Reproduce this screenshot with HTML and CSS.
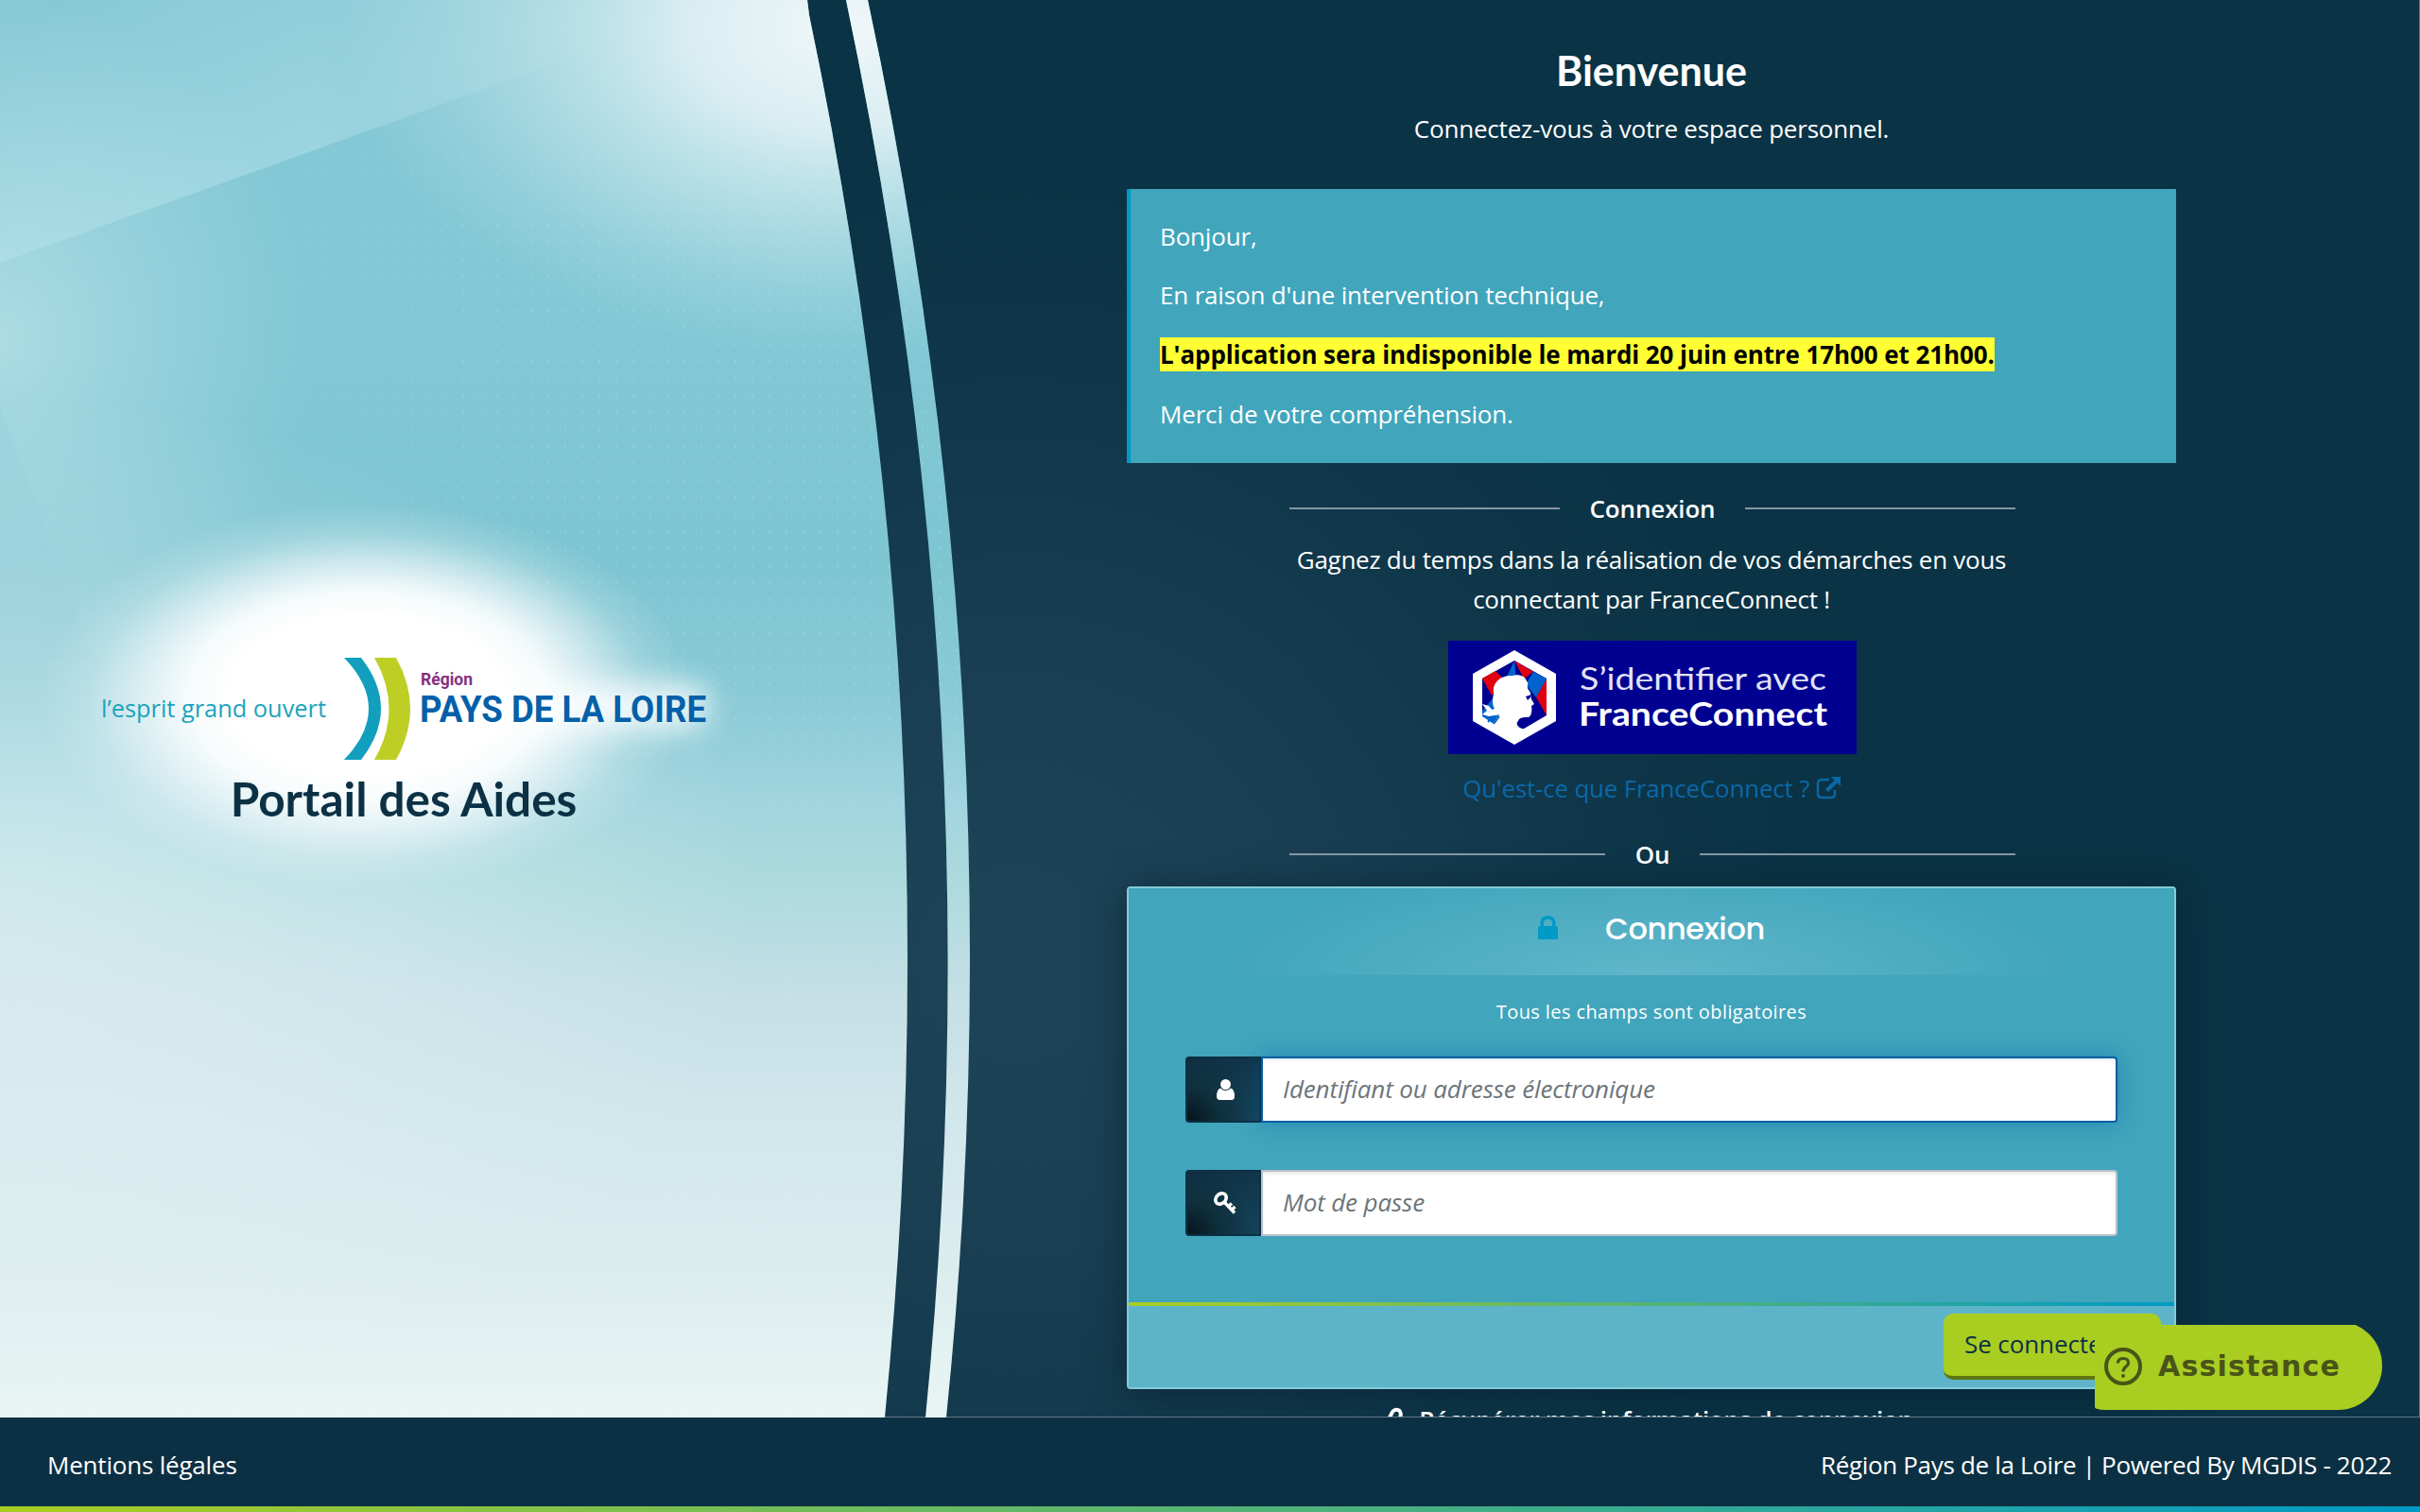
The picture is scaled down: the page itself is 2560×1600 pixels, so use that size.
FILE: index.html
```html
<!DOCTYPE html>
<html lang="fr">
<head>
<meta charset="utf-8">
<title>Portail des Aides</title>
<link rel="stylesheet" href="styles.css">
</head>
<body>
<div class="page">
  <main class="main">
    <aside class="brand">
      <svg class="scene" viewBox="0 0 1040 1500" aria-hidden="true">
        <defs>
          <linearGradient id="sky" gradientUnits="userSpaceOnUse" x1="0" y1="0" x2="0" y2="1500">
            <stop offset="0" stop-color="#86c8d5"/><stop offset=".2" stop-color="#82c8d5"/>
            <stop offset=".4" stop-color="#7ec5d2"/><stop offset=".5" stop-color="#8ccbd7"/>
            <stop offset=".57" stop-color="#a2d5df"/><stop offset=".62" stop-color="#acdadd"/>
            <stop offset=".7" stop-color="#c4dfe6"/><stop offset=".8" stop-color="#d2e8ec"/>
            <stop offset=".9" stop-color="#dcedef"/><stop offset="1" stop-color="#e9f5f4"/>
          </linearGradient>
          <linearGradient id="ray" gradientUnits="userSpaceOnUse" x1="90" y1="0" x2="180" y2="220">
            <stop offset="0" stop-color="#a9dce5" stop-opacity=".1"/><stop offset="1" stop-color="#a9dce5" stop-opacity=".65"/>
          </linearGradient>
          <linearGradient id="rayFade"><stop offset="0" stop-color="#fff"/><stop offset=".5" stop-color="#fff"/><stop offset="1" stop-color="#000"/></linearGradient>
          <mask id="rayMask"><rect width="660" height="300" fill="url(#rayFade)"/></mask>
          <radialGradient id="shine"><stop offset="0" stop-color="#f0f7f9"/><stop offset=".3" stop-color="#e6f3f6" stop-opacity=".88"/><stop offset=".55" stop-color="#daeff3" stop-opacity=".55"/><stop offset=".8" stop-color="#d4edf1" stop-opacity=".2"/><stop offset="1" stop-color="#d4edf1" stop-opacity="0"/></radialGradient>
          <radialGradient id="mist"><stop offset="0" stop-color="#bfe5ea" stop-opacity=".7"/><stop offset=".5" stop-color="#b8e1e8" stop-opacity=".35"/><stop offset="1" stop-color="#b5e0e6" stop-opacity="0"/></radialGradient>
          <radialGradient id="fog"><stop offset="0" stop-color="#eef7f8" stop-opacity=".52"/><stop offset=".5" stop-color="#eaf5f7" stop-opacity=".32"/><stop offset="1" stop-color="#e6f4f5" stop-opacity="0"/></radialGradient>
          <radialGradient id="halo"><stop offset="0" stop-color="#fff"/><stop offset=".42" stop-color="#fff"/><stop offset=".55" stop-color="#fff" stop-opacity=".9"/><stop offset=".7" stop-color="#fff" stop-opacity=".55"/><stop offset=".85" stop-color="#fff" stop-opacity=".18"/><stop offset="1" stop-color="#fff" stop-opacity="0"/></radialGradient>
          <pattern id="dots" width="18" height="18" patternUnits="userSpaceOnUse"><rect x="3" y="3" width="2" height="3" fill="#b8e4ec" opacity=".25"/></pattern>
          <linearGradient id="fade"><stop offset="0" stop-color="#000"/><stop offset=".5" stop-color="#fff"/></linearGradient>
          <mask id="dotMask"><rect x="120" y="160" width="920" height="900" fill="url(#fade)"/></mask>
          <filter id="soft" x="-10%" y="-80%" width="120%" height="260%"><feGaussianBlur stdDeviation="15"/></filter>
          <clipPath id="arcs"><path d="M0 0H854L856 16Q1010 750 936 1500H0ZM895 0H918Q1078 750 1001 1500H979Q1053 750 895 0Z"/></clipPath>
        </defs>
        <g clip-path="url(#arcs)">
          <rect width="1040" height="1500" fill="url(#sky)"/>
          <path d="M0 0H660V43L580 70L0 278Z" fill="url(#ray)" mask="url(#rayMask)"/>
          <ellipse cx="0" cy="360" rx="330" ry="360" fill="url(#mist)"/>
          <path d="M0 430L100 700H0Z" fill="#7fc4d2" opacity=".13"/>
          <ellipse cx="0" cy="960" rx="800" ry="540" fill="url(#fog)"/>
          <rect width="1040" height="1060" fill="url(#dots)" mask="url(#dotMask)"/>
          <ellipse cx="890" cy="30" rx="530" ry="350" fill="url(#shine)"/>
          <ellipse cx="388" cy="736" rx="345" ry="204" fill="url(#halo)"/>
          <rect x="440" y="724" width="310" height="48" rx="20" fill="#fff" filter="url(#soft)" opacity=".8"/>
        </g>
      </svg>
      <svg class="logo" viewBox="107 692 640 116" role="img" aria-label="Région Pays de la Loire">
        <path fill="#119fbd" d="M364 696H382Q424 750 382 804H364Q416 750 364 696Z"/>
        <path fill="#bfce24" d="M396 696H419Q449 750 419 804H396Q427 750 396 696Z"/>
        <text class="logo-motto" x="107" y="759" textLength="238" lengthAdjust="spacingAndGlyphs">l’esprit grand ouvert</text>
        <text class="logo-kind" x="445" y="725" textLength="55" lengthAdjust="spacingAndGlyphs">Région</text>
        <text class="logo-name" x="444" y="764" textLength="303" lengthAdjust="spacingAndGlyphs">PAYS DE LA LOIRE</text>
      </svg>
      <h1 class="portal">Portail des Aides</h1>
    </aside>

    <section class="panel">
      <div class="content">
        <h2 class="welcome">Bienvenue</h2>
        <p class="lead">Connectez-vous à votre espace personnel.</p>

        <div class="notice">
          <p>Bonjour,</p>
          <p>En raison d'une intervention technique,</p>
          <p><strong class="mark">L'application sera indisponible le mardi 20 juin entre 17h00 et 21h00.</strong></p>
          <p>Merci de votre compréhension.</p>
        </div>

        <div class="connect">
          <div class="rule">Connexion</div>
          <p class="pitch">Gagnez du temps dans la réalisation de vos démarches en vous connectant par FranceConnect !</p>
          <svg class="fc" viewBox="0 0 432 120" role="img" aria-label="S’identifier avec FranceConnect">
            <rect width="432" height="120" fill="#000091"/>
            <path fill="#fff" d="M70 10L114 35V85L70 110L26 85V35Z"/>
            <path fill="#000091" d="M70 21L104 40V79L70 99L36 79V40Z"/>
            <path fill="#e1000f" d="M36 40L50 32L58 40L46 58ZM70 21L90 33L80 40ZM104 40V79L93 60Z"/>
            <path fill="#0063cb" d="M70 21L72 42L62 38ZM90 33L104 40L93 60L82 46ZM36 74L48 60L54 84L48 88L36 80Z"/>
            <path fill="#fff" d="M48 56C46 44 56 36 68 37C75 35 82 38 83 43C86 45 82 48 85 52C88 55 87 58 88 62L91 67L88 69C89 74 88 80 85 81C80 81 75 81 74 85C71 88 73 92 81 94L70 101L47 88L54 78C49 80 45 79 42 74L49 72C46 67 47 61 48 56Z"/>
            <path fill="#fff" d="M36 67L43 69L47 74L42 75L50 79L43 80L36 78L41 74Z"/>
            <path fill="#000091" d="M82 59L88 57L87 60L84 63Z"/>
            <path d="M42 86L47 80M48 88L54 80" stroke="#0063cb" stroke-width="2"/>
            <text class="fc-top" x="139" y="52" textLength="261" lengthAdjust="spacingAndGlyphs">S’identifier avec</text>
            <text class="fc-bottom" x="138" y="90" textLength="263" lengthAdjust="spacingAndGlyphs">FranceConnect</text>
          </svg>
          <a class="what">Qu'est-ce que FranceConnect ?
            <svg class="ext" viewBox="0 0 26 24"><path d="M14 3H6Q2 3 2 7V18Q2 22 6 22H16Q20 22 20 18V14" fill="none" stroke="currentColor" stroke-width="2.4"/><path d="M16 0H26V10L22.500 6.500L13 16L10 13L19.500 3.500Z" fill="currentColor"/></svg>
          </a>
          <div class="rule rule-or">Ou</div>
        </div>

        <form class="login">
          <header class="login-head">
            <svg class="lock" viewBox="0 0 21 25"><path fill="currentColor" fill-rule="evenodd" d="M2.500 11V8Q2.500 0 10.500 0Q18.500 0 18.500 8V11H19.500Q21 11 21 12.500V23.500Q21 25 19.500 25H1.500Q0 25 0 23.500V12.500Q0 11 1.500 11ZM6 11H15V8Q15 3.500 10.500 3.500Q6 3.500 6 8Z"/></svg>
            <h3 class="login-title">Connexion</h3>
          </header>
          <div class="login-body">
            <p class="required">Tous les champs sont obligatoires</p>
            <div class="field field-focus">
              <span class="addon"><svg width="19" height="22" viewBox="0 0 19 22"><ellipse cx="9.500" cy="5.500" rx="5.400" ry="5.500" fill="#fff"/><path fill="#fff" d="M4 9.500Q9.500 14.500 15 9.500Q19 11 19 18Q19 22 15.500 22H3.500Q0 22 0 18Q0 11 4 9.500Z"/></svg></span>
              <input class="input" type="text" placeholder="Identifiant ou adresse électronique">
            </div>
            <div class="field">
              <span class="addon addon-key"><svg width="24" height="24" viewBox="0 0 24 24" fill="none" stroke="#fff"><ellipse cx="7.500" cy="7.500" rx="5" ry="6.300" transform="rotate(45 7.500 7.500)" stroke-width="3.600"/><path d="M11.500 11.500L22 22.500M15.500 15.500L19 12.500M19 19L22.500 16" stroke-width="3.400"/></svg></span>
              <input class="input" type="password" placeholder="Mot de passe">
            </div>
          </div>
          <footer class="login-foot"><button class="submit" type="button">Se connecter</button></footer>
        </form>
        <a class="recover">
          <svg width="18" height="26" viewBox="0 0 18 26" fill="none" stroke="#fff" stroke-width="4"><path d="M2.500 12L6 5Q9 1.500 13 3.500Q16 6 14 11L9 17"/></svg>
          Récupérer mes informations de connexion
        </a>
      </div>
    </section>
  </main>
  <footer class="footer">
    <span class="legal">Mentions légales</span>
    <span class="credit">Région Pays de la Loire | Powered By MGDIS - 2022</span>
  </footer>
  <div class="help">
    <div class="help-pill">
      <svg width="40" height="40" viewBox="0 0 40 40" fill="none" stroke="currentColor"><circle cx="20" cy="20" r="18" stroke-width="4"/><path d="M14.500 16.500Q14.500 11.500 20 11.500Q25.500 11.500 25.500 16Q25.500 18.500 22.500 20.500Q20 22.500 20 25.500" stroke-width="3.200"/><circle cx="20" cy="30" r="2" fill="currentColor" stroke="none"/></svg>
      <span>Assistance</span>
    </div>
  </div>
</div>
</body>
</html>
```
FILE: styles.css
```css
* { box-sizing: border-box; }
body { margin: 0; font: 26px/1.6 "Open Sans", "Noto Sans", sans-serif; color: #fff; background: #0c3043; }
h1, h2, h3, p { margin: 0; }
.page { width: 2560px; height: 1600px; position: relative; display: flex; flex-direction: column; overflow: hidden; }
.main { height: 1500px; display: grid; grid-template-columns: 854px 1fr; position: relative; overflow: hidden; }

.brand { display: flex; flex-direction: column; align-items: center; padding-top: 692px; }
.scene { position: absolute; left: 0; top: 0; width: 1040px; height: 1500px; z-index: 1; }
.logo { width: 640px; height: 116px; position: relative; z-index: 2; overflow: visible; }
.logo-motto { font: 500 25px "Open Sans", sans-serif; fill: #1ba3bd; }
.logo-kind { font: 700 18px Roboto, sans-serif; fill: #86307f; }
.logo-name { font: 700 39px Roboto, sans-serif; fill: #0460a9; }
.portal { font: 700 49.500px/72px Lato, sans-serif; color: #0c3145; margin-top: 1px; position: relative; z-index: 2; }

.panel { border-right: 1px solid #60798a; border-bottom: 1px solid #60798a; background: radial-gradient(circle at 220px 1020px, #1e4458 0, #1a3f53 300px, #0f3649 620px, #0a3345 850px); overflow: hidden; height: 1500px; }
.content { width: 1110px; margin-left: 338px; }
.welcome { font: 700 43px/60px Lato, sans-serif; text-align: center; padding: 45px 0 0; }
.lead { text-align: center; margin-top: 11px; letter-spacing: -.2px; }
.notice { margin-top: 42px; height: 290px; padding: 30px 30px 0 31px; background: #41a5bc; border-left: 4px solid #009ac6; letter-spacing: -.17px; }
.notice p + p { margin-top: 21.300px; }
.mark { background: #ffff33; color: #000; font-weight: 700; letter-spacing: -.09px; }

.connect { width: 768px; margin: 27px 0 0 172px; display: flex; flex-direction: column; align-items: center; }
.rule { align-self: stretch; display: flex; align-items: center; gap: 32px; font-weight: 600; line-height: 42px; letter-spacing: -.15px; }
.rule::before, .rule::after { content: ""; flex: 1; height: 2px; background: #8497a2; }
.rule-or { margin-top: 28px; }
.pitch { text-align: center; margin-top: 12px; line-height: 42px; letter-spacing: -.27px; position: relative; left: -1px; }
.fc { width: 432px; height: 120px; margin-top: 23px; display: block; }
.fc-top { font: 400 33px Lato, sans-serif; fill: #e2e2f4; }
.fc-bottom { font: 700 35px Lato, sans-serif; fill: #fff; }
.what { color: #0b67a7; margin-top: 15px; padding-right: 2px; line-height: 42px; white-space: nowrap; letter-spacing: -.22px; }
.ext { width: 26px; height: 24px; vertical-align: -2px; }

.login { height: 532px; margin-top: 13px; border: 2px solid #84cbd9; border-radius: 4px; background: #41a5bc; box-shadow: 0 4px 40px rgba(5, 25, 40, .55); display: flex; flex-direction: column; }
.login-head { height: 92px; display: flex; justify-content: center; align-items: flex-start; gap: 50px; padding: 29px 0 0; background: radial-gradient(ellipse 460px 120px at 50% 100%, #60b6ca 0, #41a5bc 100%); }
.lock { width: 21px; height: 25px; color: #009ac6; }
.login-title { font: 500 32px/36px Poppins, Inter, sans-serif; margin-top: -4px; letter-spacing: -.35px; }
.login-body { padding: 19px 60px 0; flex: 1; }
.required { font-size: 20px; line-height: 40px; letter-spacing: .4px; text-align: center; margin-bottom: 27px; }
.field { display: flex; height: 70px; margin-bottom: 50px; }
.addon { width: 80px; border: 2px solid #0c3043; border-radius: 4px 0 0 4px; display: flex; align-items: center; justify-content: center; padding-left: 5px; background: radial-gradient(circle at 0 100%, #05141d 0, #0f2f3c 34px, rgba(15, 50, 70, 0) 70px), linear-gradient(160deg, #0f2f42, #15435a); }
.addon-key { padding-left: 3px; }
.input { flex: 1; min-width: 0; border: 2px solid #b7c2cb; border-radius: 0 4px 4px 0; padding: 0 21px 1px; font: 26px "Open Sans", sans-serif; letter-spacing: -.13px; background: #fff; box-shadow: inset 0 3px 3px rgba(0, 0, 0, .07); outline: 0; }
.input::placeholder { font-style: italic; color: #6c757a; opacity: 1; }
.field-focus .input { border-color: #005ea2; box-shadow: inset 0 2px 2px rgba(0, 94, 162, .1), 0 0 24px rgba(0, 94, 162, .45); }
.login-foot { height: 90px; padding: 8px 14px 0; display: flex; justify-content: flex-end; align-items: flex-start; background: #5db4c8; border-top: 4px solid; border-image: linear-gradient(90deg, #aacd22, #009ac6) 1; }
.submit { width: 230px; height: 70px; border: 0; border-bottom: 4px solid #5f7510; border-radius: 10px; background: #aacd22; color: #0c3145; font: 26px "Open Sans", sans-serif; letter-spacing: -.1px; text-align: left; padding: 0 22px 2px; }
.recover { display: flex; justify-content: center; gap: 16px; margin-top: 11px; font-weight: 600; line-height: 42px; align-items: center; padding-right: 3px; letter-spacing: -.29px; }

.footer { height: 100px; padding: 0 30px 0 50px; display: flex; justify-content: space-between; line-height: 101px; background: #0c3043; border-bottom: 6px solid; border-image: linear-gradient(90deg, #aacd22, #009ac6) 1; }
.legal { letter-spacing: -.2px; }
.credit { letter-spacing: -.33px; }
.help { position: absolute; z-index: 5; left: 2216px; top: 1402px; width: 304px; height: 90px; overflow: hidden; border-bottom-left-radius: 10px 3px; }
.help-pill { height: 94px; margin-top: -4px; padding: 1px 0 0 10px; display: flex; align-items: center; gap: 17px; background: #aacd22; color: #485418; border-radius: 0 47px 47px 0; font: 700 30px "DejaVu Sans", sans-serif; letter-spacing: 1.200px; }
```
